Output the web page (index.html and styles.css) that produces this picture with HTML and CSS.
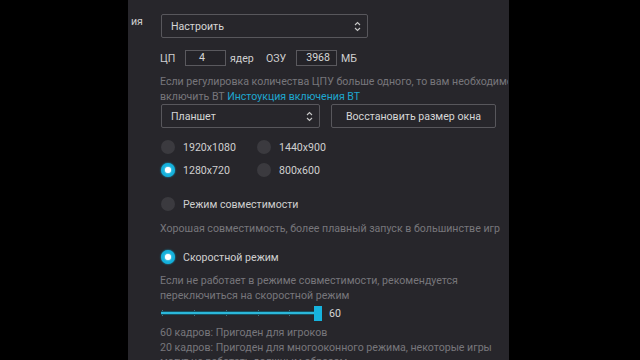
FILE: index.html
```html
<!DOCTYPE html>
<html lang="ru">
<head>
<meta charset="UTF-8">
<meta name="viewport" content="width=device-width, initial-scale=1.0">
<title>Настройки производительности</title>
<link rel="stylesheet" href="styles.css">
</head>
<body>
    <div class="panel">
        <div class="row-mode">
            <span class="cut-label">ия</span>
            <div class="select select-mode">
                <span>Настроить</span>
                <svg class="chev" width="7" height="11" viewBox="0 0 7 11"><path d="M1 4 L3.5 1.5 L6 4 M1 7 L3.5 9.5 L6 7" fill="none" stroke="#c8c8c8" stroke-width="1.1"/></svg>
            </div>
        </div>

        <div class="body">
            <div class="row-cpu">
                <span class="lbl lbl-cpu">ЦП</span>
                <span class="field field-cpu">4</span>
                <span class="lbl lbl-cores">ядер</span>
                <span class="lbl lbl-ram">ОЗУ</span>
                <span class="field field-ram">3968</span>
                <span class="lbl lbl-mb">МБ</span>
            </div>

            <p class="hint hint-cpu"><span class="clip">Если регулировка количества ЦПУ больше одного, то вам необходимо</span><br>включить ВТ <a class="link" href="#">Инстоукция включения ВТ</a></p>

            <div class="row-res">
                <div class="select select-device">
                    <span>Планшет</span>
                    <svg class="chev" width="7" height="11" viewBox="0 0 7 11"><path d="M1 4 L3.5 1.5 L6 4 M1 7 L3.5 9.5 L6 7" fill="none" stroke="#c8c8c8" stroke-width="1.1"/></svg>
                </div>
                <button class="btn">Восстановить размер окна</button>
            </div>

            <div class="res-grid">
                <label class="opt"><span class="radio"></span>1920x1080</label>
                <label class="opt"><span class="radio"></span>1440x900</label>
                <label class="opt"><span class="radio on"></span>1280x720</label>
                <label class="opt"><span class="radio"></span>800x600</label>
            </div>

            <label class="opt opt-compat"><span class="radio"></span>Режим совместимости</label>
            <p class="hint hint-compat">Хорошая совместимость, более плавный запуск в большинстве игр</p>

            <label class="opt opt-speed"><span class="radio on"></span>Скоростной режим</label>
            <p class="hint hint-speed">Если не работает в режиме совместимости, рекомендуется<br>переключиться на скоростной режим</p>

            <div class="slider">
                <svg class="track" width="153" height="16" viewBox="0 0 153 16">
                    <g stroke="#3f7482" stroke-width="1">
                        <line x1="1.5" y1="5" x2="1.5" y2="11"/>
                        <line x1="33.5" y1="5" x2="33.5" y2="11"/>
                        <line x1="65.5" y1="5" x2="65.5" y2="11"/>
                        <line x1="97.5" y1="5" x2="97.5" y2="11"/>
                        <line x1="128.5" y1="5" x2="128.5" y2="11"/>
                    </g>
                    <rect x="0" y="6" width="153" height="4" fill="#17505f"/>
                    <rect x="0" y="7" width="153" height="2" fill="#2bb7da"/>
                </svg>
                <span class="thumb"></span>
                <span class="value">60</span>
            </div>

            <p class="hint hint-fps">60 кадров: Пригоден для игроков<br>20 кадров: Пригоден для многооконного режима, некоторые игры<br>могут не работать должным образом</p>
        </div>
    </div>
</body>
</html>
```

FILE: styles.css
```css
body {
    margin: 0;
    background-color: #000;
    font-family: Roboto, "Noto Sans", sans-serif;
    font-size: 10.6px;
    color: #cfcfcf;
}
.panel {
    width: 381px;
    height: 360px;
    margin-left: 128px;
    overflow: hidden;
    background-color: #27262b;
}
.row-mode {
    display: flex;
    align-items: center;
    padding-top: 14px;
}
.cut-label {
    width: 30px;
    padding-left: 3px;
    margin-top: -9px;
}
.select {
    display: flex;
    align-items: center;
    justify-content: space-between;
    box-sizing: border-box;
    height: 24px;
    padding: 0 6px 0 9px;
    border: 1px solid #58575c;
    border-radius: 2px;
    color: #d6d6d6;
}
.select-mode {
    width: 207px;
}
.select-device {
    width: 159px;
}
.body {
    padding-left: 32px;
    white-space: nowrap;
}
.row-cpu {
    display: flex;
    align-items: center;
    height: 16px;
    margin-top: 12px;
}
.lbl {
    display: inline-block;
}
.lbl-cpu {
    width: 25px;
}
.lbl-cores {
    width: 36px;
    margin-left: 4px;
}
.lbl-ram {
    width: 30px;
}
.lbl-mb {
    margin-left: 4px;
}
.field {
    box-sizing: border-box;
    width: 41px;
    height: 16px;
    line-height: 14px;
    border: 1px solid #5a595e;
    background-color: #242328;
    color: #d6d6d6;
}
.field-cpu {
    padding-left: 13px;
}
.field-ram {
    padding-right: 6px;
    text-align: right;
}
.hint {
    margin: 0;
    line-height: 15px;
    color: #77767b;
}
.hint-cpu {
    margin-top: 8px;
}
.clip {
    display: inline-block;
    max-width: 348px;
    overflow: hidden;
    vertical-align: top;
}
.link {
    color: #1ea6cf;
    text-decoration: none;
}
.row-res {
    display: flex;
    gap: 11px;
    margin-top: 0;
    padding-left: 1px;
}
.btn {
    box-sizing: border-box;
    width: 165px;
    height: 24px;
    padding: 0;
    border: 1px solid #58575c;
    border-radius: 2px;
    background-color: transparent;
    color: #d6d6d6;
    font-family: inherit;
    font-size: 10.6px;
}
.res-grid {
    display: grid;
    grid-template-columns: 96px 120px;
    row-gap: 9px;
    margin-top: 12px;
    padding-left: 1px;
}
.opt {
    display: flex;
    align-items: center;
    gap: 8px;
    height: 14px;
    color: #cfcfcf;
}
.radio {
    position: relative;
    width: 14px;
    height: 14px;
    border-radius: 50%;
    background-color: #3b3a3f;
}
.radio.on {
    background-color: #14b0db;
    box-shadow: 0 0 2px #14b0db;
}
.radio.on::after {
    content: "";
    position: absolute;
    left: 4px;
    top: 4px;
    width: 6px;
    height: 6px;
    border-radius: 50%;
    background-color: #fff;
    box-shadow: 0 0 2px #e6f8ff;
}
.opt-compat {
    margin-top: 20px;
    padding-left: 1px;
}
.hint-compat {
    margin-top: 10px;
}
.opt-speed {
    margin-top: 14px;
    padding-left: 1px;
}
.hint-speed {
    margin-top: 9px;
}
.slider {
    display: flex;
    align-items: center;
    height: 16px;
    margin-top: 2px;
    padding-left: 1px;
}
.thumb {
    width: 8px;
    height: 15px;
    background-color: #16b3de;
}
.value {
    margin-left: 7px;
    color: #d6d6d6;
}
.hint-fps {
    margin-top: 5px;
    line-height: 14.5px;
}
```
